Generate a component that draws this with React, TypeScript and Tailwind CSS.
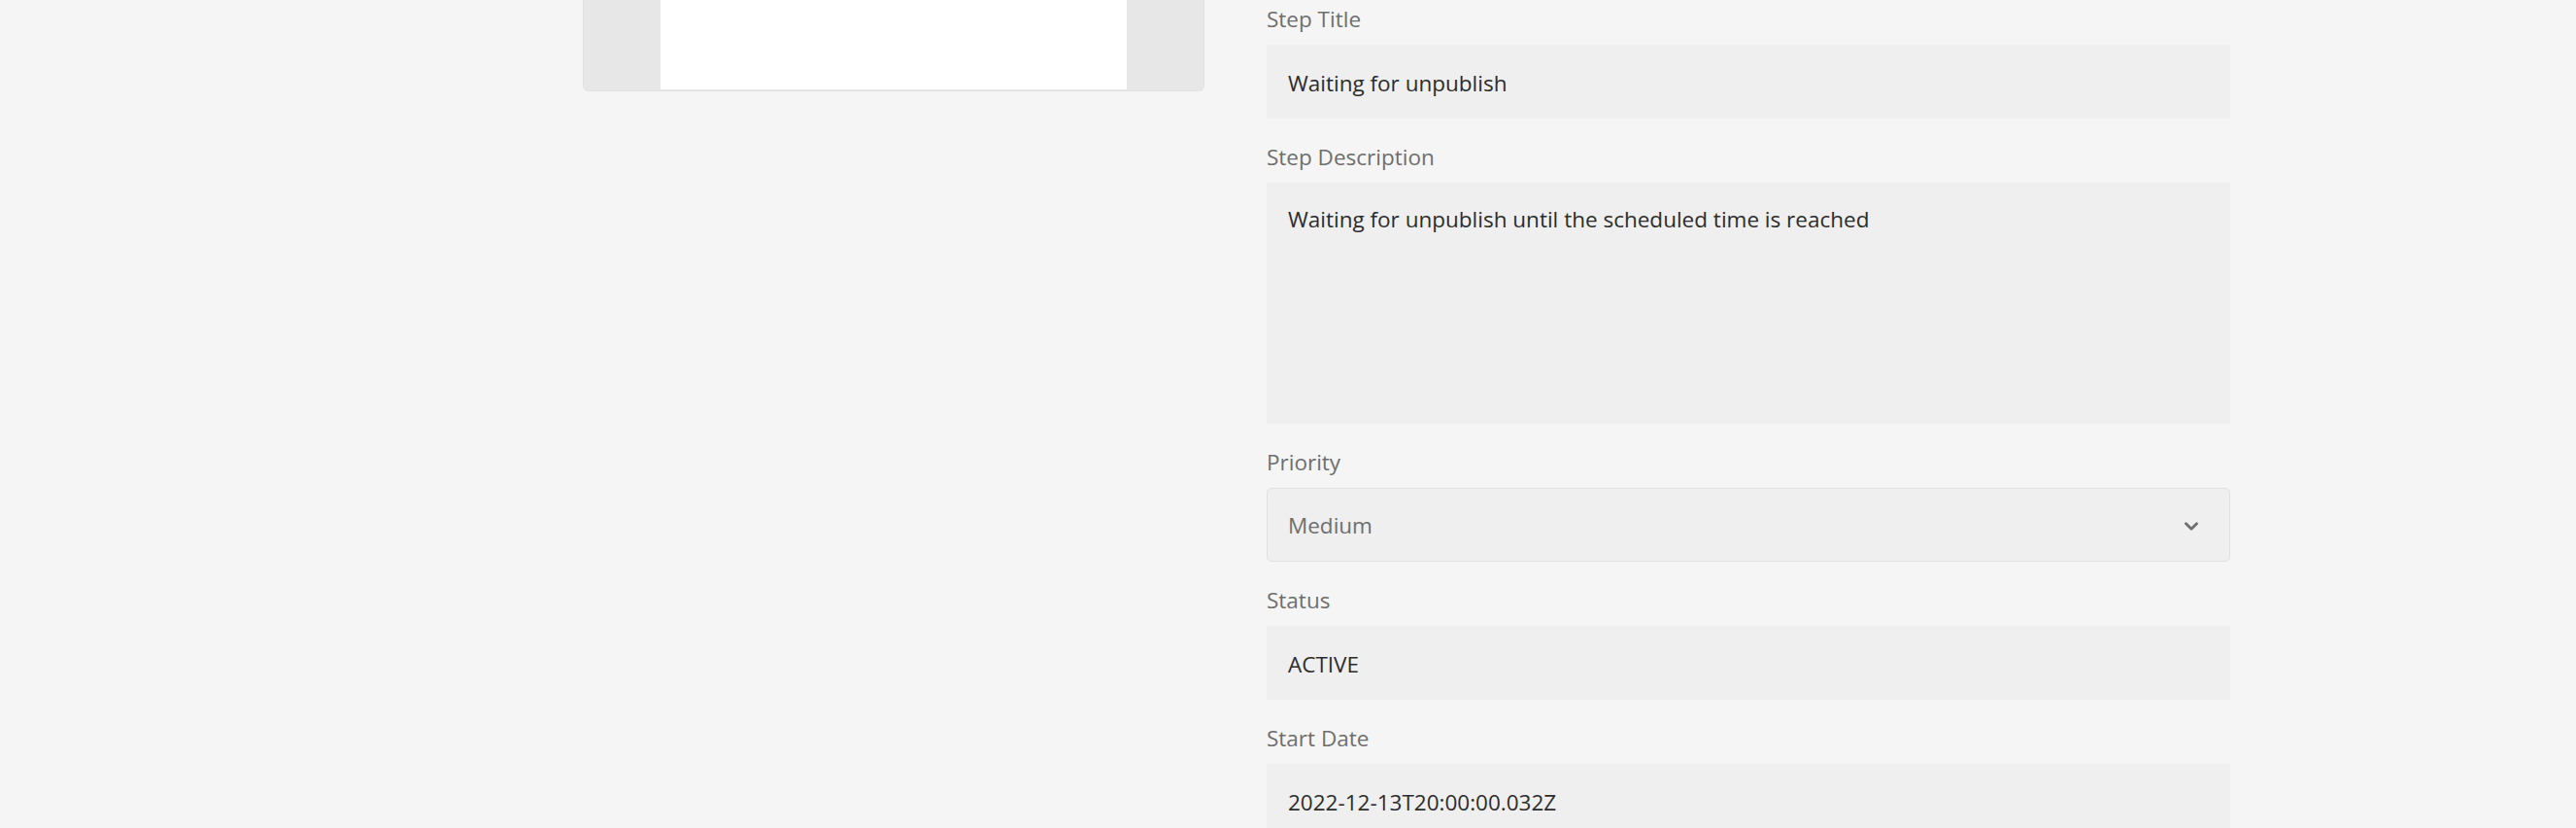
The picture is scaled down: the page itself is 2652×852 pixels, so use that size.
const FONT = { fontFamily: '"Open Sans", "Noto Sans", sans-serif' };

function Label({ children }: { children: string }) {
  return <div className="text-[22.5px] leading-[32px] text-[#6e6e6e] mb-[10px]">{children}</div>;
}

function TextField({ value }: { value: string }) {
  return (
    <div className="h-[76px] bg-[#efefef] px-[22px] pt-[4px] text-[22.5px] leading-[72px] text-[#2c2c2c] whitespace-nowrap overflow-hidden">
      {value}
    </div>
  );
}

function ChevronDown() {
  return (
    <svg width="14" height="9" viewBox="0 0 10 6" fill="#6e6e6e" aria-hidden="true">
      <path d="M9.99 1.01A1 1 0 0 0 8.28.3L5 3.58 1.72.3A1 1 0 0 0 .3 1.72l4 4a1 1 0 0 0 1.41 0l4-4a1 1 0 0 0 .28-.71z" />
    </svg>
  );
}

export default function App() {
  return (
    <div className="h-[852px] w-full overflow-hidden bg-[#f5f5f5] flex pl-[600px] gap-[64px]" style={FONT}>
      {/* preview card (scrolled, only its bottom shows) */}
      <div className="w-[640px] shrink-0">
        <div className="h-[94px] bg-[#e7e7e7] rounded-b-[6px] border border-t-0 border-[#e1e1e1] flex justify-center pb-[1px]">
          <div className="w-[480px] h-full bg-white" />
        </div>
      </div>

      {/* step form */}
      <div className="w-[992px] shrink-0 pt-[4px] flex flex-col gap-[24px]">
        <div>
          <Label>Step Title</Label>
          <TextField value="Waiting for unpublish" />
        </div>

        <div>
          <Label>Step Description</Label>
          <div className="h-[248px] bg-[#efefef] px-[22px] pt-[22px] text-[22.5px] leading-[32px] text-[#2c2c2c]">
            Waiting for unpublish until the scheduled time is reached
          </div>
        </div>

        <div>
          <Label>Priority</Label>
          <div className="h-[76px] bg-[#efefef] border border-[#e1e1e1] rounded-[5px] pl-[21px] pr-[32px] pt-[2px] flex items-center justify-between">
            <span className="text-[22.5px] leading-[32px] text-[#6e6e6e]">Medium</span>
            <ChevronDown />
          </div>
        </div>

        <div>
          <Label>Status</Label>
          <TextField value="ACTIVE" />
        </div>

        <div>
          <Label>Start Date</Label>
          <TextField value="2022-12-13T20:00:00.032Z" />
        </div>
      </div>
    </div>
  );
}
